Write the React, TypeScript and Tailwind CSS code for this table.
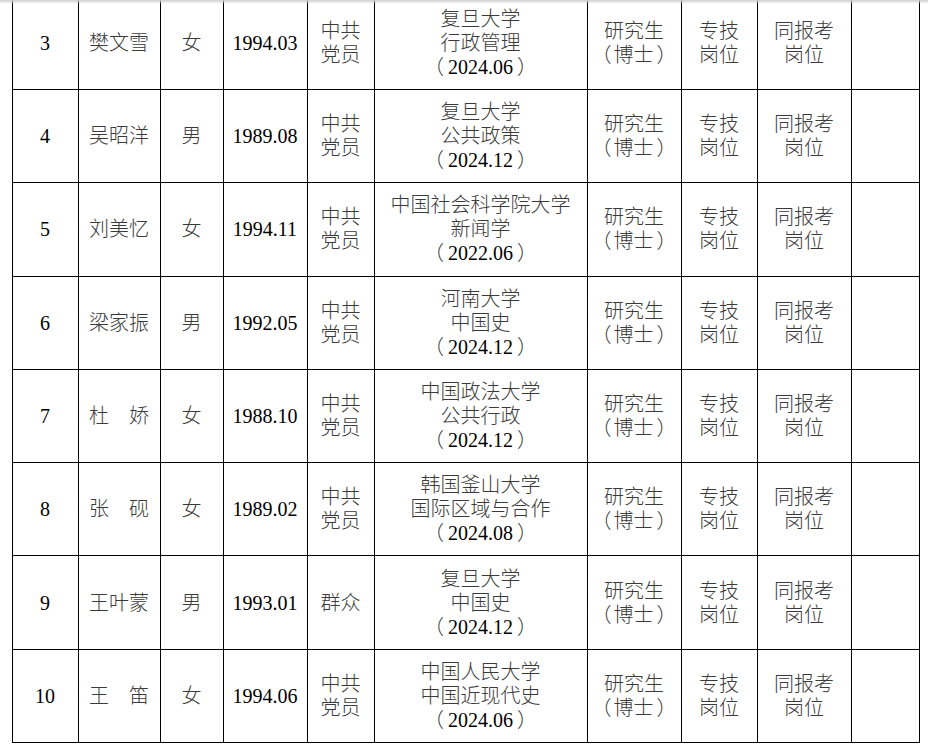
import React from 'react';

type Row = {
  no: string;
  name: string;
  sex: string;
  birth: string;
  party: string[];
  school: string[];
};

const ROWS: Row[] = [
  { no: '3', name: '樊文雪', sex: '女', birth: '1994.03', party: ['中共', '党员'], school: ['复旦大学', '行政管理', '（2024.06）'] },
  { no: '4', name: '吴昭洋', sex: '男', birth: '1989.08', party: ['中共', '党员'], school: ['复旦大学', '公共政策', '（2024.12）'] },
  { no: '5', name: '刘美忆', sex: '女', birth: '1994.11', party: ['中共', '党员'], school: ['中国社会科学院大学', '新闻学', '（2022.06）'] },
  { no: '6', name: '梁家振', sex: '男', birth: '1992.05', party: ['中共', '党员'], school: ['河南大学', '中国史', '（2024.12）'] },
  { no: '7', name: '杜　娇', sex: '女', birth: '1988.10', party: ['中共', '党员'], school: ['中国政法大学', '公共行政', '（2024.12）'] },
  { no: '8', name: '张　砚', sex: '女', birth: '1989.02', party: ['中共', '党员'], school: ['韩国釜山大学', '国际区域与合作', '（2024.08）'] },
  { no: '9', name: '王叶蒙', sex: '男', birth: '1993.01', party: ['群众'], school: ['复旦大学', '中国史', '（2024.12）'] },
  { no: '10', name: '王　笛', sex: '女', birth: '1994.06', party: ['中共', '党员'], school: ['中国人民大学', '中国近现代史', '（2024.06）'] },
];

const isAscii = (s: string) => /^[\x00-\x7f]+$/.test(s);

// latin/digit runs stay black, CJK runs are toned down like thin Song strokes
function Txt({ s }: { s: string }) {
  const parts = s.match(/[\x00-\x7f]+|[^\x00-\x7f]+/g) || [];
  return (
    <>
      {parts.map((p, i) =>
        isAscii(p) ? (
          <span key={i} className="text-black">{p}</span>
        ) : (
          <span key={i} className="text-[#3a3a3a] font-light">{p}</span>
        )
      )}
    </>
  );
}

function Line({ s }: { s: string }) {
  const m = s.match(/^（(.*)）$/);
  if (!m) return <Txt s={s} />;
  const inner = m[1];
  const ascii = isAscii(inner);
  return (
    <>
      <span className={`text-[#3a3a3a] font-light ${ascii ? 'mr-[4px]' : 'mr-[2px]'}`}>（</span>
      <Txt s={inner} />
      <span className={`text-[#3a3a3a] font-light ${ascii ? 'ml-[4px]' : 'ml-[3px]'}`}>）</span>
    </>
  );
}

function Lines({ lines }: { lines: string[] }) {
  return (
    <div className="flex flex-col items-center">
      {lines.map((l, i) => (
        <div key={i} className="whitespace-nowrap">
          <Line s={l} />
        </div>
      ))}
    </div>
  );
}

const td = 'border border-black text-center align-middle p-0';

export default function App() {
  return (
    <div className="relative w-[928px] h-[750px] overflow-hidden bg-white">
      <div className="pointer-events-none absolute inset-x-0 top-0 h-[4px] bg-gradient-to-b from-[#cfcfcf] to-white/0 z-10" />
      <table
        className="table-fixed border-collapse ml-[11.5px] -mt-[4.2px] text-[20px] leading-[24px]"
        style={{ fontFamily: '"Liberation Serif", "Noto Sans CJK SC", serif' }}
      >
        <colgroup>
          <col className="w-[66px]" />
          <col className="w-[82px]" />
          <col className="w-[63px]" />
          <col className="w-[84px]" />
          <col className="w-[67px]" />
          <col className="w-[213px]" />
          <col className="w-[94px]" />
          <col className="w-[76px]" />
          <col className="w-[94px]" />
          <col className="w-[68px]" />
        </colgroup>
        <tbody>
          {ROWS.map((r) => (
            <tr key={r.no} className="h-[93.28px]">
              <td className={td}><Txt s={r.no} /></td>
              <td className={td}><Txt s={r.name} /></td>
              <td className={td}><Txt s={r.sex} /></td>
              <td className={td}><Txt s={r.birth} /></td>
              <td className={td}><Lines lines={r.party} /></td>
              <td className={td}><Lines lines={r.school} /></td>
              <td className={td}><Lines lines={['研究生', '（博士）']} /></td>
              <td className={td}><Lines lines={['专技', '岗位']} /></td>
              <td className={td}><Lines lines={['同报考', '岗位']} /></td>
              <td className={td}></td>
            </tr>
          ))}
        </tbody>
      </table>
    </div>
  );
}
